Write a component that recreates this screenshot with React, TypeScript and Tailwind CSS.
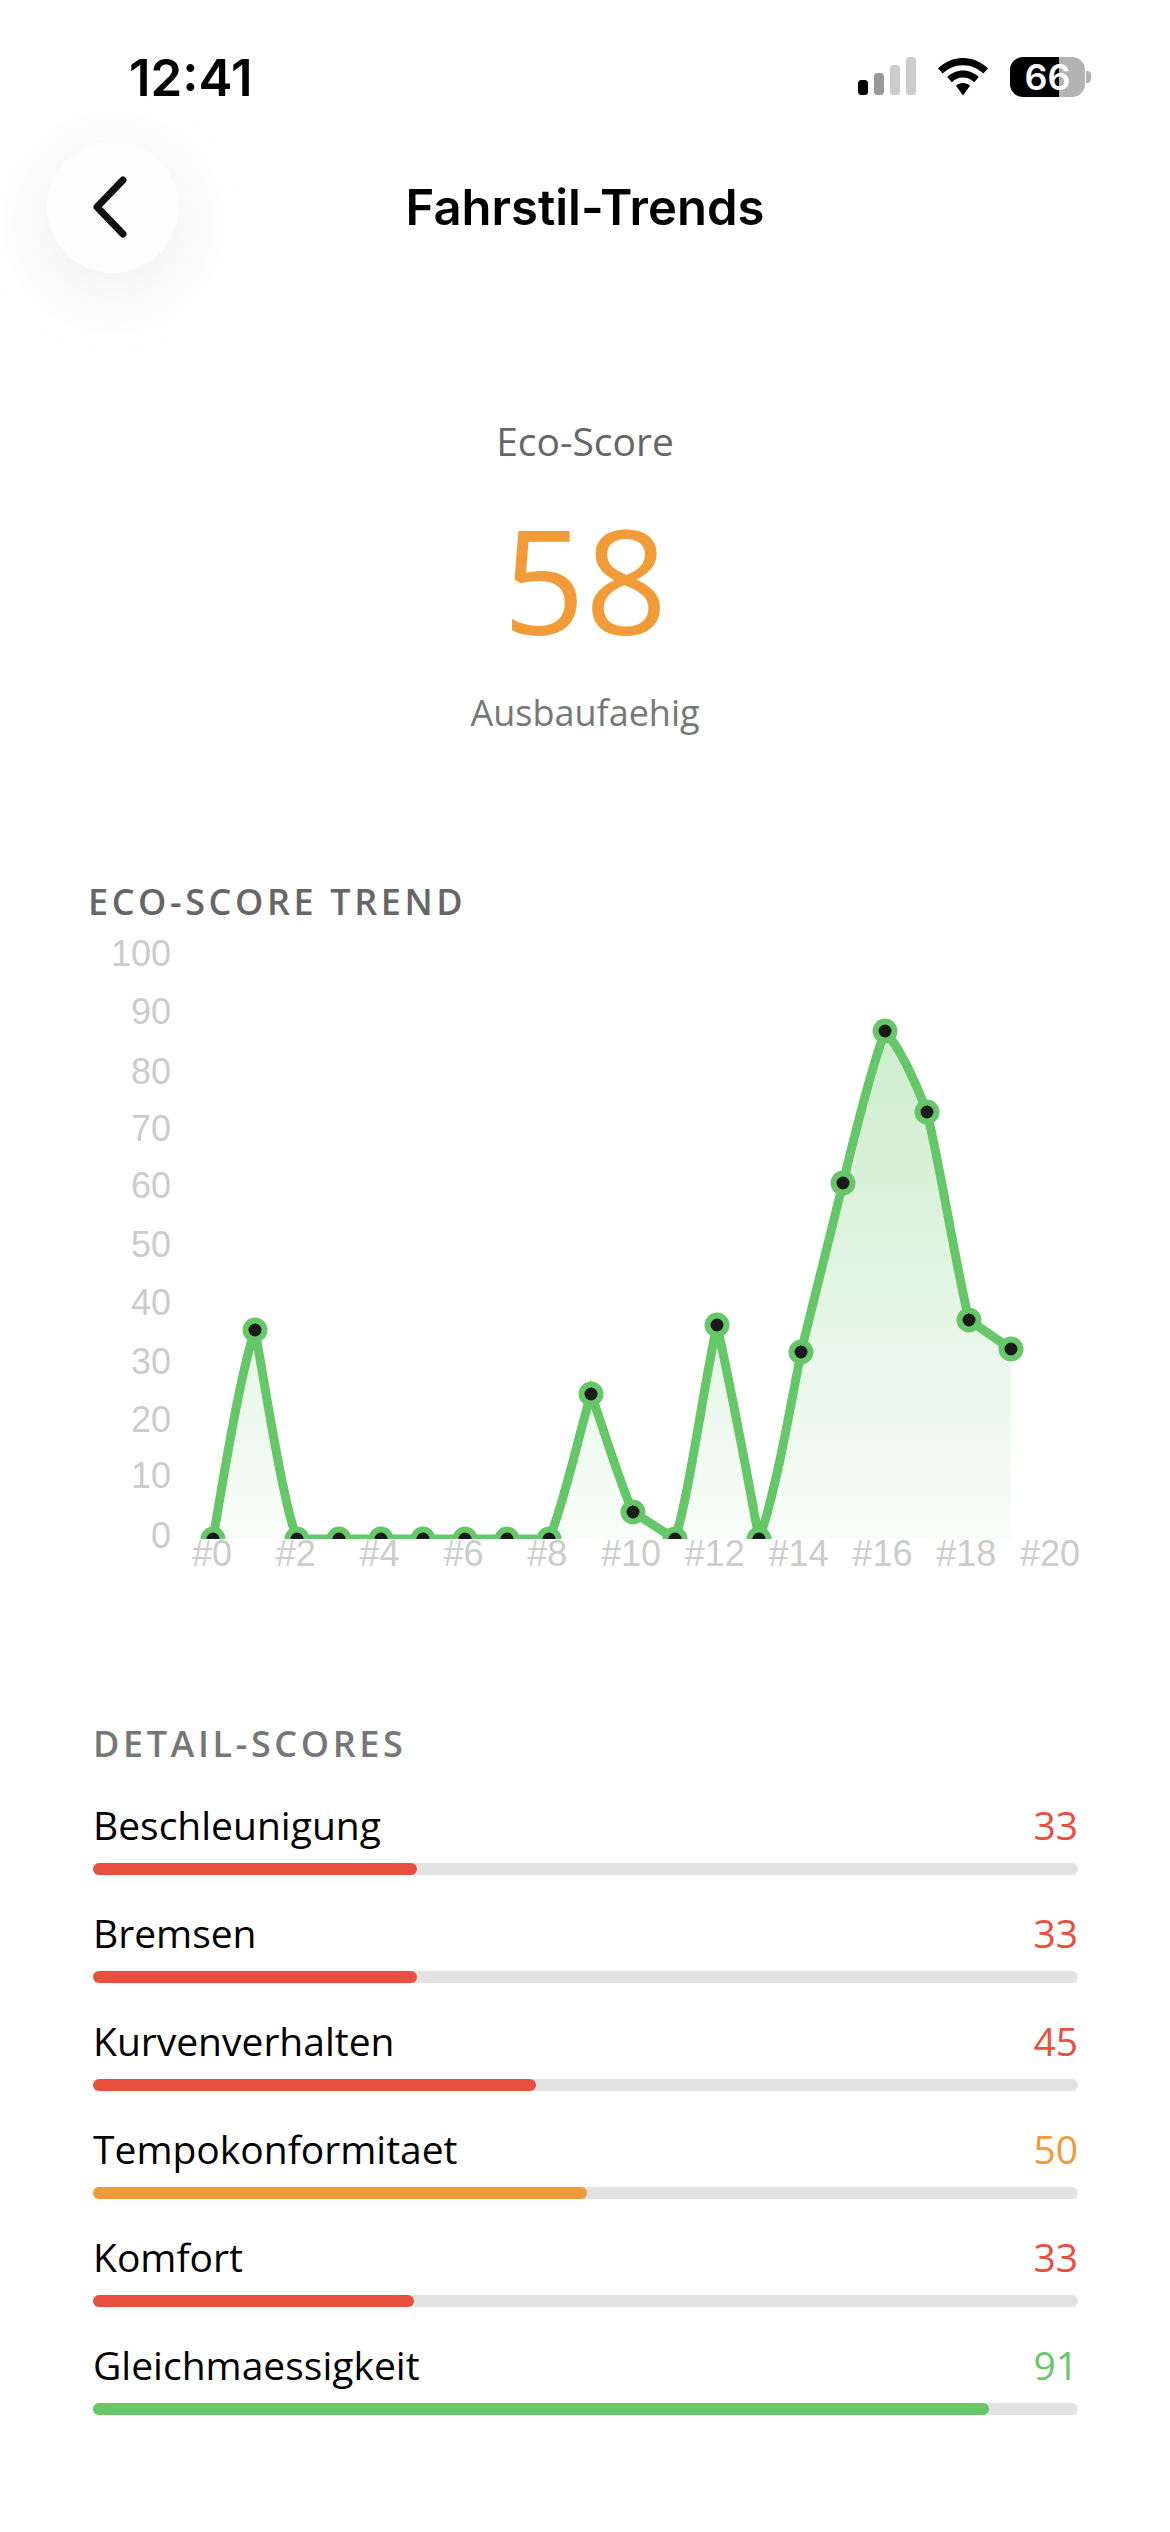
const ys = [1539, 1330, 1539, 1539, 1539, 1539, 1539, 1539, 1539, 1394, 1512, 1539, 1325, 1539, 1352, 1183, 1031, 1112, 1320, 1349];
const points = ys.map((y, i) => ({ x: 213 + 42 * i, y }));

// how much of each segment's rise the two control points take; 1/3 and 1/3 is a straight line
const bends: [number, number][] = [
  [0.4, 0.2],
  [0.38, 0.18],
  [0.33, 0.33],
  [0.33, 0.33],
  [0.33, 0.33],
  [0.33, 0.33],
  [0.33, 0.33],
  [0.33, 0.33],
  [0.22, 0.33],
  [0.33, 0.26],
  [0.33, 0.33],
  [0.2, 0.3],
  [0.3, 0.36],
  [0.2, 0.4],
  [0.33, 0.33],
  [0.38, 0.25],
  [0.2, 0.45],
  [0.28, 0.28],
  [0.33, 0.33],
];

const yLabels = [
  { text: "100", y: 953 },
  { text: "90", y: 1011 },
  { text: "80", y: 1071 },
  { text: "70", y: 1128 },
  { text: "60", y: 1185 },
  { text: "50", y: 1244 },
  { text: "40", y: 1302 },
  { text: "30", y: 1361 },
  { text: "20", y: 1419 },
  { text: "10", y: 1475 },
  { text: "0", y: 1535 },
];

const xLabels = ["#0", "#2", "#4", "#6", "#8", "#10", "#12", "#14", "#16", "#18", "#20"];

const scores = [
  { label: "Beschleunigung", value: "33", width: 32.9, bar: "bg-[#e94f3d]", text: "text-[#e94f3d]" },
  { label: "Bremsen", value: "33", width: 32.9, bar: "bg-[#e94f3d]", text: "text-[#e94f3d]" },
  { label: "Kurvenverhalten", value: "45", width: 45, bar: "bg-[#e94f3d]", text: "text-[#e94f3d]" },
  { label: "Tempokonformitaet", value: "50", width: 50.2, bar: "bg-[#f19a38]", text: "text-[#f19a38]" },
  { label: "Komfort", value: "33", width: 32.6, bar: "bg-[#e94f3d]", text: "text-[#e94f3d]" },
  { label: "Gleichmaessigkeit", value: "91", width: 91, bar: "bg-[#66c768]", text: "text-[#66c768]" },
];

function curve() {
  let d = `M ${points[0].x} ${points[0].y}`;
  bends.forEach(([a, b], i) => {
    const p0 = points[i];
    const p1 = points[i + 1];
    const rise = p1.y - p0.y;
    d += ` C ${p0.x + 14} ${p0.y + a * rise}, ${p1.x - 14} ${p1.y - b * rise}, ${p1.x} ${p1.y}`;
  });
  return d;
}

const linePath = curve();
const areaPath = `${linePath} L 1011 1539 L 213 1539 Z`;

function StatusIcons() {
  return (
    <div className="flex items-center">
      <svg width="62" height="40" viewBox="0 0 62 40">
        <rect x="0" y="23" width="10" height="15" rx="3.5" fill="#000" />
        <rect x="16" y="16" width="10" height="22" rx="3.5" fill="#999" />
        <rect x="32" y="8" width="10" height="30" rx="3.5" fill="#ccc" />
        <rect x="48" y="0" width="10" height="38" rx="3.5" fill="#ccc" />
      </svg>
      <svg width="50" height="38" viewBox="0 0 50 38" className="ml-[18px]">
        <path d="M25 0C15.5 0 7 3.7 0 10.3L4.6 15.6C10 10.4 17 7.2 25 7.2S40 10.4 45.4 15.6L50 10.3C43 3.7 34.5 0 25 0Z" fill="#000" />
        <path d="M25 12.5C19 12.5 13.5 14.9 9.2 19.1L13.8 24.3C16.8 21.4 20.7 19.6 25 19.6S33.2 21.4 36.2 24.3L40.8 19.1C36.5 14.9 31 12.5 25 12.5Z" fill="#000" />
        <path d="M25 25C22.3 25 19.8 26 18 27.8L25 37.5L32 27.8C30.2 26 27.7 25 25 25Z" fill="#000" />
      </svg>
      <div className="ml-[22px] flex h-[40px] w-[75px] items-center justify-center rounded-[13px] bg-[linear-gradient(90deg,#000_49px,#b3b3b3_49px)] font-['Inter',sans-serif] text-[36px] font-semibold leading-none text-white">
        66
      </div>
      <div className="ml-[1px] h-[12px] w-[5px] rounded-r-[4px] bg-[#b3b3b3]" />
    </div>
  );
}

function TrendChart() {
  return (
    <svg width="1170" height="660" viewBox="0 930 1170 660" className="mt-[6px] block">
      <defs>
        <linearGradient id="area" gradientUnits="userSpaceOnUse" x1="0" y1="1031" x2="0" y2="1539">
          <stop offset="0" stopColor="#66c768" stopOpacity="0.33" />
          <stop offset="1" stopColor="#66c768" stopOpacity="0.04" />
        </linearGradient>
        <clipPath id="plot">
          <rect x="170" y="930" width="1000" height="609" />
        </clipPath>
      </defs>
      {yLabels.map((l) => (
        <text
          key={l.text}
          x="171"
          y={l.y + 13}
          textAnchor="end"
          className="fill-[#cccccc] font-['Liberation_Sans',sans-serif] text-[36px]"
        >
          {l.text}
        </text>
      ))}
      <g clipPath="url(#plot)">
        <path d={areaPath} fill="url(#area)" />
        <path d={linePath} fill="none" stroke="#66c768" strokeWidth="9" />
        {points.map((p) => (
          <circle key={p.x} cx={p.x} cy={p.y} r="9.5" fill="#1a1a1a" stroke="#66c768" strokeWidth="6" />
        ))}
      </g>
      {xLabels.map((l, i) => (
        <text
          key={l}
          x={212 + 83.8 * i}
          y="1566"
          textAnchor="middle"
          className="fill-[#cccccc] font-['Liberation_Sans',sans-serif] text-[36px]"
        >
          {l}
        </text>
      ))}
    </svg>
  );
}

export default function App() {
  return (
    <div className="h-[2532px] w-[1170px] overflow-hidden bg-white font-['Open_Sans',sans-serif]">
      <div className="flex h-[141px] items-start justify-between pl-[129px] pr-[79px] pt-[57px]">
        <span className="font-['Inter',sans-serif] text-[51px] font-semibold leading-[42px] text-black">12:41</span>
        <StatusIcons />
      </div>

      <div className="grid grid-cols-[1fr_auto_1fr] items-center pl-[47px]">
        <button className="flex h-[132px] w-[132px] items-center justify-center rounded-full bg-[#fdfdfd] shadow-[0_16px_90px_rgba(0,0,0,0.08)]">
          <svg width="40" height="62" viewBox="0 0 40 62" className="-ml-[7px]">
            <path d="M33 4 L7 31 L33 58" fill="none" stroke="#111" strokeWidth="7" strokeLinecap="round" strokeLinejoin="round" />
          </svg>
        </button>
        <h1 className="-ml-[47px] font-['Inter',sans-serif] text-[49px] font-semibold leading-none text-black">
          Fahrstil-Trends
        </h1>
        <div />
      </div>

      <div className="mt-[145px] flex flex-col items-center">
        <p className="text-[39px] leading-[46px] text-[#666666]">Eco-Score</p>
        <p className="mt-[25px] text-[144px] font-[370] leading-[180px] text-[#f19c38]">58</p>
        <p className="mt-[21px] text-[36px] leading-[46px] text-[#777777]">Ausbaufaehig</p>
      </div>

      <p className="mt-[144px] pl-[88px] text-[36px] font-semibold leading-[44px] tracking-[3.6px] text-[#666666]">
        ECO-SCORE TREND
      </p>

      <TrendChart />

      <div className="mt-[132px] pl-[93px] pr-[92px]">
        <p className="text-[36px] font-semibold leading-[44px] tracking-[3.6px] text-[#777777]">DETAIL-SCORES</p>
        <div className="mt-[32px] flex flex-col gap-[31px]">
          {scores.map((s) => (
            <div key={s.label}>
              <div className="flex items-center justify-between">
                <span className="text-[39px] leading-[54px] text-black">{s.label}</span>
                <span className={`text-[39px] leading-[54px] ${s.text}`}>{s.value}</span>
              </div>
              <div className="mt-[11px] h-[12px] rounded-[6px] bg-[#e2e2e2]">
                <div className={`h-full rounded-[6px] ${s.bar}`} style={{ width: `${s.width}%` }} />
              </div>
            </div>
          ))}
        </div>
      </div>
    </div>
  );
}
